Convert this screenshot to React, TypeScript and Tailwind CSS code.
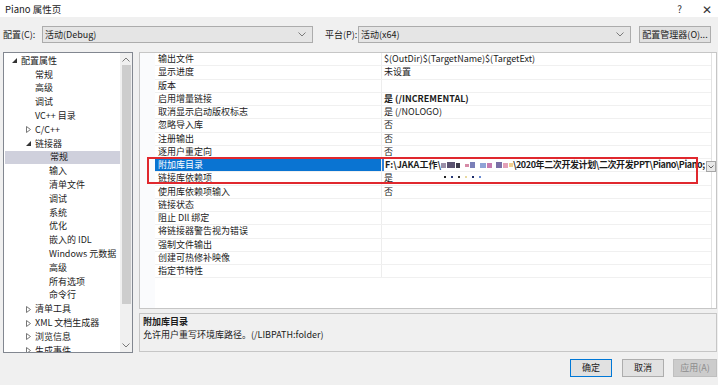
import React from "react";

type TreeItem = { label: string; level: 0 | 1 | 2; arrow?: "open" | "closed"; selected?: boolean };

const tree: TreeItem[] = [
  { label: "配置属性", level: 0, arrow: "open" },
  { label: "常规", level: 1 },
  { label: "高级", level: 1 },
  { label: "调试", level: 1 },
  { label: "VC++ 目录", level: 1 },
  { label: "C/C++", level: 1, arrow: "closed" },
  { label: "链接器", level: 1, arrow: "open" },
  { label: "常规", level: 2, selected: true },
  { label: "输入", level: 2 },
  { label: "清单文件", level: 2 },
  { label: "调试", level: 2 },
  { label: "系统", level: 2 },
  { label: "优化", level: 2 },
  { label: "嵌入的 IDL", level: 2 },
  { label: "Windows 元数据", level: 2 },
  { label: "高级", level: 2 },
  { label: "所有选项", level: 2 },
  { label: "命令行", level: 2 },
  { label: "清单工具", level: 1, arrow: "closed" },
  { label: "XML 文档生成器", level: 1, arrow: "closed" },
  { label: "浏览信息", level: 1, arrow: "closed" },
  { label: "生成事件", level: 1, arrow: "closed" },
];

const indent = { 0: "pl-[8px]", 1: "pl-[22px]", 2: "pl-[36px]" };

type Prop = { name: string; value: string; bold?: boolean; active?: boolean };

const props: Prop[] = [
  { name: "输出文件", value: "$(OutDir)$(TargetName)$(TargetExt)" },
  { name: "显示进度", value: "未设置" },
  { name: "版本", value: "" },
  { name: "启用增量链接", value: "是 (/INCREMENTAL)", bold: true },
  { name: "取消显示启动版权标志", value: "是 (/NOLOGO)" },
  { name: "忽略导入库", value: "否" },
  { name: "注册输出", value: "否" },
  { name: "逐用户重定向", value: "否" },
  { name: "附加库目录", value: "", active: true },
  { name: "链接库依赖项", value: "是" },
  { name: "使用库依赖项输入", value: "否" },
  { name: "链接状态", value: "" },
  { name: "阻止 Dll 绑定", value: "" },
  { name: "将链接器警告视为错误", value: "" },
  { name: "强制文件输出", value: "" },
  { name: "创建可热修补映像", value: "" },
  { name: "指定节特性", value: "" },
];

function Chevron({ up = false }: { up?: boolean }) {
  return (
    <svg width="8" height="5" viewBox="0 0 8 5" className={up ? "rotate-180" : ""}>
      <path d="M0.5 0.5 L4 4 L7.5 0.5" fill="none" stroke="#7a7a7a" strokeWidth="1" />
    </svg>
  );
}

function TreeArrow({ kind }: { kind?: "open" | "closed" }) {
  if (kind === "open") {
    return (
      <svg width="5" height="5" viewBox="0 0 5 5">
        <path d="M5 0 L5 5 L0 5 Z" fill="#333" />
      </svg>
    );
  }
  if (kind === "closed") {
    return (
      <svg width="5" height="7" viewBox="0 0 5 7">
        <path d="M0.5 0.5 L4.5 3.5 L0.5 6.5 Z" fill="none" stroke="#777" strokeWidth="1" />
      </svg>
    );
  }
  return null;
}

function Combo({ text, width }: { text: string; width: string }) {
  return (
    <div
      className={`${width} h-[17px] bg-[#e5e5e5] border border-[#acacac] flex items-center justify-between pl-[2px] pr-[6px]`}
    >
      <span>{text}</span>
      <Chevron />
    </div>
  );
}

export default function App() {
  return (
    <div className="w-[718px] h-[385px] bg-[#f0f0f0] flex flex-col text-[9px] leading-[12px] text-[#1b1b1b] font-['Noto_Sans_CJK_SC',sans-serif] overflow-hidden">
      {/* TITLE */}
      <div className="h-[17px] bg-white flex items-center justify-between pl-[5px] pr-[6px]">
        <span className="text-[9.5px]">Piano 属性页</span>
        <div className="flex items-center gap-[20px] text-[#333]">
          <span className="text-[10px]">?</span>
          <span className="text-[12px] font-light">✕</span>
        </div>
      </div>

      {/* CONFIG ROW */}
      <div className="mt-[9px] h-[17px] flex items-center pl-[3px] whitespace-nowrap">
        <span className="w-[39px]">配置(C):</span>
        <Combo text="活动(Debug)" width="w-[271px]" />
        <span className="ml-[12px] w-[33px]">平台(P):</span>
        <Combo text="活动(x64)" width="w-[273px]" />
        <div className="ml-[8px] w-[72px] h-[17px] bg-[#e1e1e1] border border-[#adadad] flex items-center justify-center">
          配置管理器(O)...
        </div>
      </div>

      {/* MAIN */}
      <div className="mt-[9px] flex pl-[3px] pr-[1px] gap-[6px]">
        {/* TREE */}
        <div className="w-[130px] h-[301px] bg-white border border-[#828790] flex overflow-hidden">
          <div className="flex-1 pt-[1px] overflow-hidden">
            {tree.map((t, i) => (
              <div
                key={i}
                className={`h-[13.8px] flex items-center whitespace-nowrap ${indent[t.level]} ${
                  t.selected ? "bg-[#cfd0dc] ml-[1px] -mr-[1px]" : ""
                }`}
              >
                <span className="w-[9px] flex items-center">
                  <TreeArrow kind={t.arrow} />
                </span>
                <span>{t.label}</span>
              </div>
            ))}
          </div>
          {/* SCROLLBAR */}
          <div className="w-[12px] bg-[#f0f0f0] flex flex-col items-center">
            <div className="h-[12px] flex items-center justify-center">
              <Chevron up />
            </div>
            <div className="w-[9px] h-[239px] bg-[#cdcdcd]" />
            <div className="flex-1" />
            <div className="h-[14px] flex items-center justify-center">
              <Chevron />
            </div>
          </div>
        </div>

        {/* RIGHT */}
        <div className="w-[578px] flex flex-col gap-[4px]">
          {/* PROPERTY GRID */}
          <div className="relative h-[257px] bg-white border border-[#c6c6c6] flex">
            <div className="w-[15px] bg-[#fafbfd]" />
            <div className="w-[557px] border-r border-[#e3e3e3]">
              {props.map((p, i) => (
                <div key={i} className="h-[13.25px] flex border-b border-[#f0f0f0]">
                  <div
                    className={`w-[227px] pl-[3px] flex items-center border-r border-[#ededed] whitespace-nowrap ${
                      p.active ? "bg-[#0a74d2] text-white" : ""
                    }`}
                  >
                    {p.name}
                  </div>
                  {p.active ? (
                    <div className="flex-1 flex items-center whitespace-nowrap font-bold overflow-hidden">
                      <span className="w-[2px] h-full bg-[#2f7fd8] mr-[1px]" />
                      <span>F:\JAKA工作\</span>
                      <span className="flex items-center gap-[1px] blur-[0.6px]">
                        <span className="w-[5px] h-[5px] bg-[#9b8fa8]" />
                        <span className="w-[8px] h-[6px] bg-[#5a5270]" />
                        <span className="w-[4px] h-[5px] bg-[#3d3a4a]" />
                        <span className="w-[4px] h-[3px] ml-[4px] bg-[#d68aa6]" />
                        <span className="w-[5px] h-[6px] bg-[#7a7fb8]" />
                        <span className="w-[6px] h-[5px] ml-[4px] bg-[#8fa3d6]" />
                        <span className="w-[5px] h-[5px] bg-[#c77cb0]" />
                        <span className="w-[6px] h-[6px] ml-[3px] bg-[#7a6fa6]" />
                        <span className="w-[5px] h-[5px] bg-[#e3a0b8]" />
                        <span className="w-[4px] h-[4px] bg-[#f0d090]" />
                      </span>
                      <span className="tracking-[-0.4px]">\2020年二次开发计划\二次开发PPT\Piano\Piano;</span>
                    </div>
                  ) : (
                    <div className={`flex-1 pl-[2px] flex items-center whitespace-nowrap ${p.bold ? "font-bold" : ""}`}>
                      {p.value}
                    </div>
                  )}
                </div>
              ))}
            </div>
            <div className="flex-1" />

            {/* dropdown of the edited value */}
            <div className="absolute left-[566px] top-[108px] w-[10px] h-[11px] bg-[#e8e8e8] border border-[#a6a6a6] flex items-center justify-center">
              <svg width="6" height="4" viewBox="0 0 6 4">
                <path d="M0.5 0.5 L3 3 L5.5 0.5" fill="none" stroke="#666" strokeWidth="1" />
              </svg>
            </div>

            {/* blurred dots */}
            <div className="absolute left-[304px] top-[123px] flex gap-[5px] blur-[0.4px]">
              <span className="w-[2px] h-[2px] bg-[#222]" />
              <span className="w-[2px] h-[2px] bg-[#2a3a7a]" />
              <span className="w-[2px] h-[2px] bg-[#333]" />
              <span className="w-[2px] h-[2px] bg-[#e8d9a0]" />
              <span className="w-[2px] h-[2px] bg-[#1a2a6a]" />
              <span className="w-[2px] h-[2px] bg-[#6a8ad0]" />
            </div>

            {/* red annotation frame */}
            <div className="absolute left-[7px] top-[104px] w-[551px] h-[27px] border-2 border-[#e0282e] pointer-events-none" />
          </div>

          {/* DESCRIPTION */}
          <div className="h-[39px] border border-[#c6c6c6] pl-[3px] pt-[2px] flex flex-col">
            <span className="font-bold">附加库目录</span>
            <span className="mt-[1px]">允许用户重写环境库路径。(/LIBPATH:folder)</span>
          </div>
        </div>
      </div>

      {/* BUTTONS */}
      <div className="mt-[6px] flex justify-end pr-[1px]">
        <div className="w-[42px] h-[18px] bg-[#e1e1e1] border border-[#0078d7] flex items-center justify-center">
          确定
        </div>
        <div className="ml-[10px] w-[42px] h-[18px] bg-[#e1e1e1] border border-[#adadad] flex items-center justify-center">
          取消
        </div>
        <div className="ml-[9px] w-[44px] h-[18px] bg-[#cccccc] border border-[#bfbfbf] text-[#8d8d8d] flex items-center justify-center">
          应用(A)
        </div>
      </div>
    </div>
  );
}
